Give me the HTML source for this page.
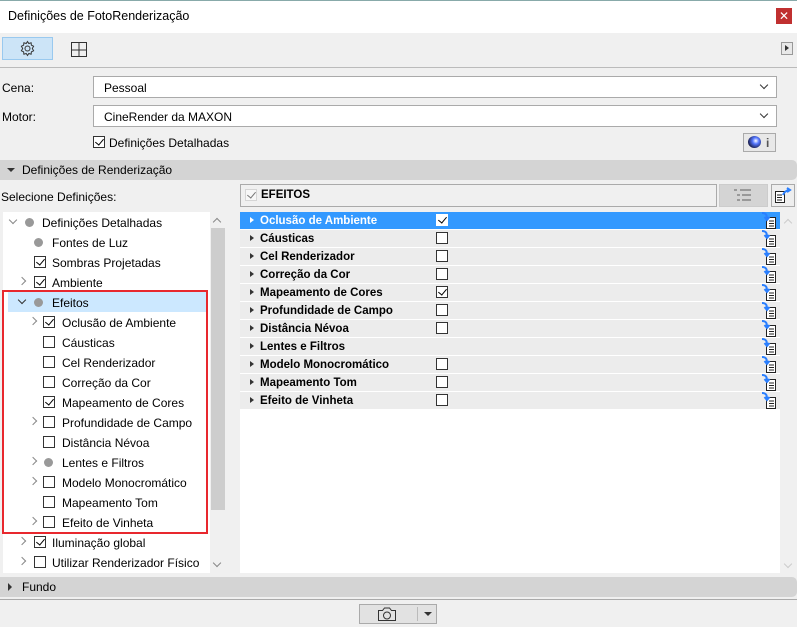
<!DOCTYPE html>
<html><head><meta charset="utf-8"><style>
*{box-sizing:border-box;margin:0;padding:0}
body{width:797px;height:627px;overflow:hidden;background:#f0f0f0;font-family:"Liberation Sans",sans-serif;font-size:12px;color:#000;position:relative}
.a{position:absolute}
.cb{position:absolute;width:12px;height:12px;border:1px solid #333;background:#fff}
.cb.on::after{content:"";position:absolute;left:3px;top:0px;width:4px;height:7px;border:solid #000;border-width:0 1.5px 1.5px 0;transform:rotate(40deg)}
.dot{position:absolute;width:9px;height:9px;border-radius:50%;background:#999}
.chv{position:absolute;width:6px;height:6px;border:solid #888;border-width:0 1.3px 1.3px 0}
.r{transform:rotate(-45deg)}.d{transform:rotate(45deg)}
.t{position:absolute;font-size:12px;white-space:nowrap}
.row{position:absolute;left:240px;width:540px;height:17px;background:#ececec;font-weight:bold;font-size:11.5px}
.row span{position:absolute;left:20px;top:3px}
.row i{position:absolute;left:10px;top:5px;border-left:4px solid #333;border-top:3.5px solid transparent;border-bottom:3.5px solid transparent}
.row .cb{left:196px;top:2px}
.ic{position:absolute;left:521px;top:0px}
</style></head><body>
<div class="a" style="left:0;top:0;width:797px;height:33px;background:#fff;border-top:1px solid #8aa"></div>
<div class="t" style="left:8px;top:9px;font-size:12.5px">Definições de FotoRenderização</div>
<div class="a" style="left:776px;top:8px;width:16px;height:16px;background:#c03030;color:#fff;font-size:12px;text-align:center;line-height:16px">✕</div>
<div class="a" style="left:2px;top:37px;width:51px;height:23px;background:#cce4f7;border:1px solid #99c9ef"></div>
<svg class="a" style="left:19px;top:40px" width="17" height="17" viewBox="0 0 17 17"><circle cx="8.5" cy="8.5" r="2.5" fill="none" stroke="#333"/><path d="M8.5 1.5l1.3 2 2.3-.7.3 2.4 2.2 1-1.3 2.3 1.3 2.3-2.2 1-.3 2.4-2.3-.7-1.3 2-1.3-2-2.3.7-.3-2.4-2.2-1 1.3-2.3-1.3-2.3 2.2-1 .3-2.4 2.3.7z" fill="none" stroke="#333"/></svg>
<svg class="a" style="left:71px;top:42px" width="16" height="15"><rect x=".5" y=".5" width="15" height="14" fill="none" stroke="#333"/><path d="M8 1v13M1 8h14" stroke="#333"/></svg>
<div class="a" style="left:781px;top:42px;width:12px;height:13px;border:1px solid #999;background:#e8e8e8"></div>
<div class="a" style="left:785px;top:45px;border-left:4px solid #333;border-top:3.5px solid transparent;border-bottom:3.5px solid transparent"></div>
<div class="a" style="left:0;top:67px;width:797px;height:1px;background:#bbb"></div>
<div class="t" style="left:2px;top:81px">Cena:</div>
<div class="a" style="left:93px;top:76px;width:684px;height:22px;background:#fff;border:1px solid #aaa"></div>
<div class="t" style="left:104px;top:81px">Pessoal</div>
<div class="chv d" style="left:761px;top:82px;border-color:#333"></div>
<div class="t" style="left:2px;top:110px">Motor:</div>
<div class="a" style="left:93px;top:105px;width:684px;height:22px;background:#fff;border:1px solid #aaa"></div>
<div class="t" style="left:104px;top:110px">CineRender da MAXON</div>
<div class="chv d" style="left:761px;top:111px;border-color:#333"></div>
<div class="cb on" style="left:93px;top:136px"></div>
<div class="t" style="left:109px;top:136px">Definições Detalhadas</div>
<div class="a" style="left:743px;top:133px;width:33px;height:19px;border:1px solid #aaa;background:#e8e8e8"></div>
<div class="a" style="left:748px;top:136px;width:13px;height:12px;border-radius:50%;background:radial-gradient(circle at 60% 40%,#fff 0,#57f 30%,#113 80%)"></div>
<div class="t" style="left:766px;top:136px;font-weight:bold;color:#555">i</div>
<div class="a" style="left:0;top:160px;width:797px;height:20px;background:#d4d4d4;border-radius:0 5px 5px 0"></div>
<div class="a" style="left:7px;top:168px;border-top:4px solid #333;border-left:4px solid transparent;border-right:4px solid transparent"></div>
<div class="t" style="left:22px;top:163px">Definições de Renderização</div>
<div class="t" style="left:1px;top:190px">Selecione Definições:</div>
<div class="a" style="left:240px;top:184px;width:477px;height:23px;background:#f0f0f0;border:1px solid #aaa"></div>
<div class="cb on" style="left:245px;top:189px;border-color:#bbb;opacity:.5"></div>
<div class="t" style="left:261px;top:189px;font-weight:bold;font-size:11.5px">EFEITOS</div>
<div class="a" style="left:719px;top:184px;width:49px;height:23px;background:#d4d4d4;border:1px solid #ccc"></div>
<svg class="a" style="left:734px;top:189px" width="17" height="13"><path d="M0 1h3M6 1h11M3 6h3M8 6h9M3 11h3M8 11h9" stroke="#999" stroke-width="2"/></svg>
<div class="a" style="left:771px;top:184px;width:24px;height:23px;border:1px solid #aaa;background:#eee"></div>
<svg class="a" style="left:774px;top:186px" width="19" height="19"><path d="M1.5 5.5h9v11h-9z" fill="#fff" stroke="#222"/><path d="M3 9h5M3 11.5h5M3 14h5" stroke="#222"/><path d="M9 9c1-3 3-4 6-5M13 2l3 2-3 2" fill="none" stroke="#2a7fff" stroke-width="2"/></svg>
<!-- left tree -->
<div class="a" style="left:3px;top:212px;width:207px;height:361px;background:#fff"></div>
<div class="a" style="left:210px;top:212px;width:16px;height:361px;background:#f0f0f0"></div>
<div class="a" style="left:211px;top:228px;width:14px;height:282px;background:#cdcdcd"></div>
<div class="chv" style="left:214px;top:219px;transform:rotate(-135deg)"></div>
<div class="chv d" style="left:214px;top:560px"></div>
<div class="a" style="left:8px;top:292px;width:198px;height:20px;background:#cce8ff"></div>
<div class="a" style="left:2px;top:290px;width:206px;height:244px;border:2px solid #e8282e"></div>
<div class="chv d" style="left:10px;top:217px"></div><div class="dot" style="left:25px;top:218px"></div><div class="t" style="left:42px;top:216px">Definições Detalhadas</div>
<div class="dot" style="left:34px;top:238px"></div><div class="t" style="left:52px;top:236px">Fontes de Luz</div>
<div class="cb on" style="left:34px;top:256px"></div><div class="t" style="left:52px;top:256px">Sombras Projetadas</div>
<div class="chv r" style="left:19px;top:278px"></div><div class="cb on" style="left:34px;top:276px"></div><div class="t" style="left:52px;top:276px">Ambiente</div>
<div class="chv d" style="left:19px;top:297px;border-color:#333"></div><div class="dot" style="left:34px;top:298px"></div><div class="t" style="left:52px;top:296px">Efeitos</div>
<div class="chv r" style="left:30px;top:318px"></div><div class="cb on" style="left:43px;top:316px"></div><div class="t" style="left:62px;top:316px">Oclusão de Ambiente</div>
<div class="cb" style="left:43px;top:336px"></div><div class="t" style="left:62px;top:336px">Cáusticas</div>
<div class="cb" style="left:43px;top:356px"></div><div class="t" style="left:62px;top:356px">Cel Renderizador</div>
<div class="cb" style="left:43px;top:376px"></div><div class="t" style="left:62px;top:376px">Correção da Cor</div>
<div class="cb on" style="left:43px;top:396px"></div><div class="t" style="left:62px;top:396px">Mapeamento de Cores</div>
<div class="chv r" style="left:30px;top:418px"></div><div class="cb" style="left:43px;top:416px"></div><div class="t" style="left:62px;top:416px">Profundidade de Campo</div>
<div class="cb" style="left:43px;top:436px"></div><div class="t" style="left:62px;top:436px">Distância Névoa</div>
<div class="chv r" style="left:30px;top:458px"></div><div class="dot" style="left:44px;top:458px"></div><div class="t" style="left:62px;top:456px">Lentes e Filtros</div>
<div class="chv r" style="left:30px;top:478px"></div><div class="cb" style="left:43px;top:476px"></div><div class="t" style="left:62px;top:476px">Modelo Monocromático</div>
<div class="cb" style="left:43px;top:496px"></div><div class="t" style="left:62px;top:496px">Mapeamento Tom</div>
<div class="chv r" style="left:30px;top:518px"></div><div class="cb" style="left:43px;top:516px"></div><div class="t" style="left:62px;top:516px">Efeito de Vinheta</div>
<div class="chv r" style="left:19px;top:538px"></div><div class="cb on" style="left:34px;top:536px"></div><div class="t" style="left:52px;top:536px">Iluminação global</div>
<div class="chv r" style="left:19px;top:558px"></div><div class="cb" style="left:34px;top:556px"></div><div class="t" style="left:52px;top:556px">Utilizar Renderizador Físico</div>
<!-- right list -->
<div class="a" style="left:240px;top:212px;width:540px;height:361px;background:#fff"></div>
<div class="a" style="left:780px;top:212px;width:15px;height:361px;background:#f0f0f0"></div>
<div class="chv" style="left:785px;top:220px;transform:rotate(-135deg);border-color:#ccc"></div>
<div class="chv d" style="left:785px;top:561px;border-color:#ccc"></div>
<svg width="0" height="0" style="position:absolute"><defs><g id="ic"><path d="M5.5 5.5h9v11h-9z" fill="#fff" stroke="#222"/><path d="M8 9h5M8 11.5h5M8 14h5" stroke="#222"/><path d="M1 1c4 0 5 2 5 6M3.5 5l2.5 3 2.5-3" fill="none" stroke="#2a7fff" stroke-width="2"/></g></defs></svg>
<div class="row" style="top:212px;background:#3399ff;color:#fff"><i style="border-left-color:#fff"></i><span>Oclusão de Ambiente</span><div class="cb on" style="border-color:#fff"></div><svg class="ic" width="16" height="18"><use href="#ic"/></svg></div>
<div class="row" style="top:230px"><i></i><span>Cáusticas</span><div class="cb"></div><svg class="ic" width="16" height="18"><use href="#ic"/></svg></div>
<div class="row" style="top:248px"><i></i><span>Cel Renderizador</span><div class="cb"></div><svg class="ic" width="16" height="18"><use href="#ic"/></svg></div>
<div class="row" style="top:266px"><i></i><span>Correção da Cor</span><div class="cb"></div><svg class="ic" width="16" height="18"><use href="#ic"/></svg></div>
<div class="row" style="top:284px"><i></i><span>Mapeamento de Cores</span><div class="cb on"></div><svg class="ic" width="16" height="18"><use href="#ic"/></svg></div>
<div class="row" style="top:302px"><i></i><span>Profundidade de Campo</span><div class="cb"></div><svg class="ic" width="16" height="18"><use href="#ic"/></svg></div>
<div class="row" style="top:320px"><i></i><span>Distância Névoa</span><div class="cb"></div><svg class="ic" width="16" height="18"><use href="#ic"/></svg></div>
<div class="row" style="top:338px"><i></i><span>Lentes e Filtros</span><svg class="ic" width="16" height="18"><use href="#ic"/></svg></div>
<div class="row" style="top:356px"><i></i><span>Modelo Monocromático</span><div class="cb"></div><svg class="ic" width="16" height="18"><use href="#ic"/></svg></div>
<div class="row" style="top:374px"><i></i><span>Mapeamento Tom</span><div class="cb"></div><svg class="ic" width="16" height="18"><use href="#ic"/></svg></div>
<div class="row" style="top:392px"><i></i><span>Efeito de Vinheta</span><div class="cb"></div><svg class="ic" width="16" height="18"><use href="#ic"/></svg></div>
<!-- footer -->
<div class="a" style="left:0;top:577px;width:797px;height:20px;background:#d4d4d4;border-radius:0 5px 5px 0"></div>
<div class="a" style="left:8px;top:583px;border-left:4px solid #333;border-top:4px solid transparent;border-bottom:4px solid transparent"></div>
<div class="t" style="left:22px;top:580px">Fundo</div>
<div class="a" style="left:0;top:599px;width:797px;height:1px;background:#aaa"></div>
<div class="a" style="left:359px;top:604px;width:78px;height:20px;border:1px solid #aaa;background:#e2e2e2"></div>
<svg class="a" style="left:377px;top:606px" width="20" height="16"><path d="M1.5 4.5h4l2-2.5h5l2 2.5h4v10h-17z" fill="none" stroke="#333"/><circle cx="10" cy="9.5" r="3.5" fill="none" stroke="#333"/></svg>
<div class="a" style="left:417px;top:607px;width:1px;height:14px;background:#bbb"></div>
<div class="a" style="left:424px;top:612px;border-top:4px solid #333;border-left:4px solid transparent;border-right:4px solid transparent"></div>
</body></html>
